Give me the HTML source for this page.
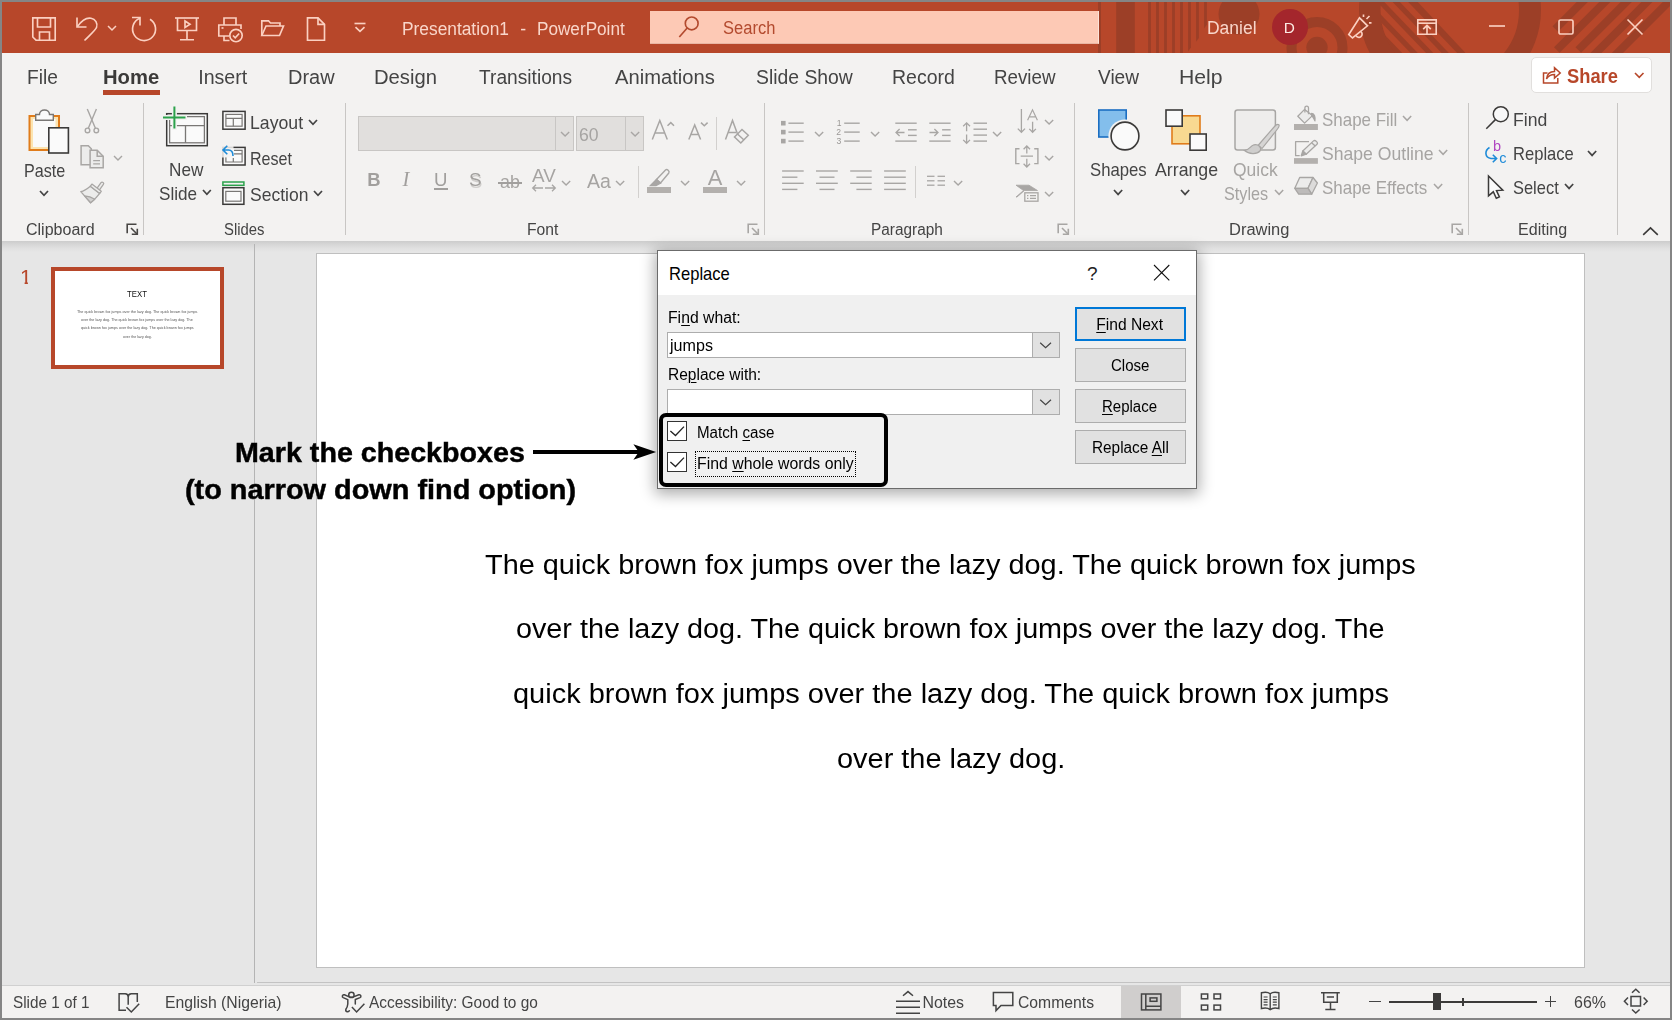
<!DOCTYPE html>
<html><head><meta charset="utf-8"><title>Presentation1 - PowerPoint</title>
<style>
html,body{margin:0;padding:0;}
body{width:1672px;height:1020px;overflow:hidden;position:relative;background:#e6e6e6;font-family:"Liberation Sans",sans-serif;}
.gl{position:absolute;left:0;top:0;width:0;height:0;will-change:transform;}
.t{position:absolute;white-space:pre;display:block;}
.r{position:absolute;box-sizing:border-box;display:block;overflow:visible;}
u{text-decoration:underline;text-underline-offset:1.5px;text-decoration-thickness:1px;}
</style></head><body>
<div class="gl">
<div class="r" style="left:0px;top:0px;width:1672px;height:1020px;background:#858585;"></div>
<div class="r" style="left:2px;top:2px;width:1668px;height:1016px;background:#e6e6e6;"></div>
<div class="r" style="left:2px;top:2px;width:1668px;height:51px;background:#b7472a;overflow:hidden;"></div>
<svg class="r" style="left:2px;top:2px;overflow:hidden;" width="1668" height="51" viewBox="2 2 1668 51" fill="none"><rect x="1098" y="0" width="3" height="55" fill="#9c3f27"/><rect x="1116.2" y="0" width="18.6" height="55" fill="#9c3f27"/><rect x="1148.1" y="0" width="2.8" height="55" fill="#9c3f27"/><rect x="1156.1" y="0" width="2.8" height="55" fill="#9c3f27"/><rect x="1164.1" y="0" width="2.8" height="55" fill="#9c3f27"/><rect x="1172.1" y="0" width="2.8" height="55" fill="#9c3f27"/><rect x="1180.1" y="0" width="2.8" height="55" fill="#9c3f27"/><path d="M1188.1 0 H1190.9 V47.6 L1188.1 51.4 Z" fill="#9c3f27"/><path d="M1196.1 0 H1198.9 V37.9 L1196.1 41.699999999999996 Z" fill="#9c3f27"/><path d="M1204.1 0 H1206.9 V24.700000000000003 L1204.1 28.5 Z" fill="#9c3f27"/><circle cx="1239" cy="14" r="20.5" fill="#9c3f27"/><circle cx="1317" cy="47.5" r="25.5" stroke="#9c3f27" stroke-width="10"/><circle cx="1317" cy="47.5" r="10.7" fill="#9c3f27"/><circle cx="1450" cy="10" r="80" stroke="#9c3f27" stroke-width="22"/><clipPath id="rc"><circle cx="1450" cy="10" r="69.5"/></clipPath><g clip-path="url(#rc)"><path d="M1378 0 H1415.9 L1465.1 52.6 V56 H1378 Z" fill="#9c3f27"/><path d="M1397.90 0 H1406.27 L1459.72 55.6 H1451.35 Z" fill="#b7472a"/><path d="M1382.35 0 H1390.72 L1444.17 55.6 H1435.80 Z" fill="#b7472a"/><path d="M1366.80 0 H1375.17 L1428.62 55.6 H1420.25 Z" fill="#b7472a"/><path d="M1351.25 0 H1359.62 L1413.07 55.6 H1404.70 Z" fill="#b7472a"/><path d="M1335.70 0 H1344.07 L1397.52 55.6 H1389.15 Z" fill="#b7472a"/></g><path d="M1592.3 -8 L1555.3 29" stroke="#9c3f27" stroke-width="7.9"/><path d="M1614.8 -8 L1556.8 50" stroke="#9c3f27" stroke-width="7.9"/><path d="M1636.3 -8 L1578.3 50" stroke="#9c3f27" stroke-width="7.9"/><path d="M1656.9 -8 L1568.9 80" stroke="#9c3f27" stroke-width="7.9"/><path d="M1678.4 -8 L1590.4 80" stroke="#9c3f27" stroke-width="7.9"/></svg>
<svg class="r" style="left:30px;top:15px;" width="28" height="28" viewBox="0 0 28 28" fill="none"><g stroke="#fbd0c1" stroke-width="1.65"><path d="M2.8 2.8 H25.2 V25.2 H6 L2.8 22 Z"/><path d="M7.5 2.8 V12 H20.5 V2.8"/><path d="M9.5 25.2 V17 H19.5 V25.2"/></g></svg>
<svg class="r" style="left:74px;top:15px;" width="28" height="28" viewBox="0 0 28 28" fill="none"><g stroke="#fbd0c1" stroke-width="1.65"><path d="M3 2.5 V12 H12.5"/><path d="M3.5 11.5 C8 5 13 2.5 17 3.2 C21.5 4 24 8.5 22.5 12.5 C21.5 15 18 18 10.5 25.5"/></g></svg>
<svg class="r" style="left:106.5px;top:24.5px;" width="10" height="6.3" viewBox="0 0 10 6.3" fill="none"><path d="M1 1 L5.0 5.0 L9 1" stroke="#fbd0c1" stroke-width="1.5"/></svg>
<svg class="r" style="left:130px;top:15px;" width="28" height="28" viewBox="0 0 28 28" fill="none"><g stroke="#fbd0c1" stroke-width="1.65"><path d="M2 2.5 H10 V10.5"/><path d="M20 4.2 A11.5 11.5 0 1 1 10 3.3"/></g></svg>
<svg class="r" style="left:174px;top:15px;" width="26" height="28" viewBox="0 0 26 28" fill="none"><g stroke="#fbd0c1" stroke-width="1.65"><path d="M1 3 H25"/><path d="M3.5 3 V15.5 H22.5 V3"/><path d="M13 15.5 V24.5 M6 24.7 H20"/><path d="M11 6 L16 9.2 L11 12.4 Z"/></g></svg>
<svg class="r" style="left:216px;top:15px;" width="28" height="28" viewBox="0 0 28 28" fill="none"><g stroke="#fbd0c1" stroke-width="1.65"><path d="M8 10 V3 H20 V10"/><path d="M13 21 H2.8 V10 H25 V14"/><path d="M5.5 13 H7.5"/><path d="M8 21 V25.5 H13.5"/><circle cx="20" cy="20.5" r="6.2"/><path d="M17 20.5 L19.2 22.8 L23.2 18.5"/></g></svg>
<svg class="r" style="left:260px;top:18px;" width="26" height="20" viewBox="0 0 26 20" fill="none"><g stroke="#fbd0c1" stroke-width="1.65"><path d="M1.8 17.5 V2.8 H8.5 L10.5 5 H20 V8"/><path d="M1.8 17.5 L6 8 H23.5 L19.5 17.5 Z"/></g></svg>
<svg class="r" style="left:305px;top:15px;" width="22" height="28" viewBox="0 0 22 28" fill="none"><g stroke="#fbd0c1" stroke-width="1.65"><path d="M2.5 2.8 H13 L19.5 9.3 V25.2 H2.5 Z"/><path d="M13 2.8 V9.3 H19.5"/></g></svg>
<svg class="r" style="left:352px;top:21px;" width="16" height="12" viewBox="0 0 16 12" fill="none"><g stroke="#fbd0c1" stroke-width="1.65"><path d="M2.5 2.5 H13.5"/><path d="M3.5 6.2 L8 10.3 L12.5 6.2"/></g></svg>
<span class="t" style="left:401.57px;top:21.00px;font-size:17.6px;line-height:17.6px;color:#f9d6ca;transform:scaleX(0.9849);transform-origin:0 0;">Presentation1</span>
<span class="t" style="left:520.20px;top:21.00px;font-size:17.6px;line-height:17.6px;color:#f9d6ca;">-</span>
<span class="t" style="left:537.09px;top:21.00px;font-size:17.6px;line-height:17.6px;color:#f9d6ca;transform:scaleX(0.9751);transform-origin:0 0;">PowerPoint</span>
<div class="r" style="left:650px;top:11px;width:449px;height:33px;background:#fdc9b5;border-right:1px solid #fbe3da;border-bottom:1px solid #e9b5a3;"></div>
<svg class="r" style="left:676px;top:14px;" width="26" height="26" viewBox="0 0 26 26" fill="none"><g stroke="#b34a2e" stroke-width="1.65"><circle cx="15.7" cy="9.4" r="6.4"/><path d="M11.2 14 L3.3 23"/></g></svg>
<span class="t" style="left:722.97px;top:19.00px;font-size:18px;line-height:18px;color:#b34a2e;transform:scaleX(0.9173);transform-origin:0 0;">Search</span>
<span class="t" style="left:1206.89px;top:19.00px;font-size:18px;line-height:18px;color:#f9d6ca;transform:scaleX(0.9711);transform-origin:0 0;">Daniel</span>
<div class="r" style="left:1272px;top:8.7px;width:36px;height:36px;background:#a4262c;border-radius:50%;"></div>
<span class="t" style="left:1283.75px;top:20.00px;font-size:15.4px;line-height:15.4px;color:#fdebe4;">D</span>
<svg class="r" style="left:1346px;top:13px;" width="30" height="28" viewBox="0 0 30 28" fill="none"><g stroke="#fbd0c1" stroke-width="1.65"><path d="M2.8 21.5 L13.5 4.8 L21.5 12.8 L6.5 25 Z"/><path d="M10 22.5 A3.2 3.2 0 1 0 14.8 18.6"/><path d="M20.5 6 L23.5 3 M23 9.8 H25.5 M17.5 4 V1.5"/></g></svg>
<svg class="r" style="left:1416px;top:17px;" width="22" height="20" viewBox="0 0 22 20" fill="none"><g stroke="#fbd0c1" stroke-width="1.65"><path d="M1.8 2.8 H20.2 V17.2 H1.8 Z"/><path d="M1.8 6.2 H20.2"/><path d="M11 17 V8.4 M7.2 12.2 L11 8.4 L14.8 12.2"/></g></svg>
<svg class="r" style="left:1489px;top:24px;" width="16" height="4" viewBox="0 0 16 4" fill="none"><path d="M0 2 H16" stroke="#fbd0c1" stroke-width="1.65"/></svg>
<svg class="r" style="left:1558px;top:19px;" width="16" height="16" viewBox="0 0 16 16" fill="none"><rect x="1" y="1" width="14" height="14" rx="1.5" stroke="#fbd0c1" stroke-width="1.65"/></svg>
<svg class="r" style="left:1626px;top:18px;" width="18" height="18" viewBox="0 0 18 18" fill="none"><path d="M1.5 1.5 L16.5 16.5 M16.5 1.5 L1.5 16.5" stroke="#fbd0c1" stroke-width="1.65"/></svg>
<div class="r" style="left:2px;top:53px;width:1668px;height:188px;background:#f3f2f1;"></div>
<span class="t" style="left:26.74px;top:68.00px;font-size:19.6px;line-height:19.6px;color:#444444;transform:scaleX(0.9777);transform-origin:0 0;">File</span>
<span class="t" style="left:198.20px;top:68.00px;font-size:19.6px;line-height:19.6px;color:#444444;">Insert</span>
<span class="t" style="left:288.37px;top:68.00px;font-size:19.6px;line-height:19.6px;color:#444444;transform:scaleX(1.0181);transform-origin:0 0;">Draw</span>
<span class="t" style="left:374.35px;top:68.00px;font-size:19.6px;line-height:19.6px;color:#444444;transform:scaleX(1.0318);transform-origin:0 0;">Design</span>
<span class="t" style="left:479.06px;top:68.00px;font-size:19.6px;line-height:19.6px;color:#444444;transform:scaleX(0.9787);transform-origin:0 0;">Transitions</span>
<span class="t" style="left:614.95px;top:68.00px;font-size:19.6px;line-height:19.6px;color:#444444;transform:scaleX(1.0291);transform-origin:0 0;">Animations</span>
<span class="t" style="left:756.11px;top:68.00px;font-size:19.6px;line-height:19.6px;color:#444444;transform:scaleX(0.9877);transform-origin:0 0;">Slide Show</span>
<span class="t" style="left:892.41px;top:68.00px;font-size:19.6px;line-height:19.6px;color:#444444;transform:scaleX(0.9942);transform-origin:0 0;">Record</span>
<span class="t" style="left:994.47px;top:68.00px;font-size:19.6px;line-height:19.6px;color:#444444;transform:scaleX(0.9569);transform-origin:0 0;">Review</span>
<span class="t" style="left:1097.90px;top:68.00px;font-size:19.6px;line-height:19.6px;color:#444444;transform:scaleX(0.9739);transform-origin:0 0;">View</span>
<span class="t" style="left:1179.27px;top:68.00px;font-size:19.6px;line-height:19.6px;color:#444444;transform:scaleX(1.0818);transform-origin:0 0;">Help</span>
<span class="t" style="left:102.66px;top:68.00px;font-size:19.6px;line-height:19.6px;color:#3b3a39;font-weight:bold;transform:scaleX(1.0324);transform-origin:0 0;">Home</span>
<div class="r" style="left:103px;top:90.4px;width:57px;height:4.2px;background:#b7472a;"></div>
<div class="r" style="left:1531px;top:57px;width:121px;height:36px;background:#fff;border:1px solid #e1dfdd;border-radius:5px;"></div>
<svg class="r" style="left:1541px;top:65px;" width="22" height="20" viewBox="0 0 22 20" fill="none"><g stroke="#b7472a" stroke-width="1.5"><path d="M6.5 8 H2.5 V18 H16.8 V13"/><path d="M5.5 14 C6 9 9 6.5 13.5 6.5 V2.8 L19.2 8 L13.5 13 V9.5 C10 9.5 7.5 10.5 5.5 14 Z"/></g></svg>
<span class="t" style="left:1566.96px;top:66.00px;font-size:20.2px;line-height:20.2px;color:#b7472a;font-weight:bold;transform:scaleX(0.9079);transform-origin:0 0;">Share</span>
<svg class="r" style="left:1634px;top:72px;" width="10.5" height="6.6" viewBox="0 0 10.5 6.6" fill="none"><path d="M1 1 L5.25 5.3 L9.5 1" stroke="#b7472a" stroke-width="1.6"/></svg>
<svg class="r" style="left:26px;top:106px;" width="46" height="50" viewBox="0 0 46 50" fill="none">
<rect x="3.5" y="10" width="29.5" height="34" fill="#fce4b0" stroke="#e07c1b" stroke-width="2"/>
<rect x="7" y="13" width="22.5" height="28" fill="#fafafa"/>
<path d="M9.7 14.2 V8.5 H13.5 C13.5 2.5 23.5 2.5 23.5 8.5 H27.3 V14.2 Z" fill="#fafafa" stroke="#797775" stroke-width="1.4"/>
<rect x="22.8" y="21.8" width="19.6" height="25.2" fill="#fafafa" stroke="#3b3a39" stroke-width="1.6"/></svg>
<span class="t" style="left:23.99px;top:163.00px;font-size:17.9px;line-height:17.9px;color:#444444;transform:scaleX(0.9011);transform-origin:0 0;">Paste</span>
<svg class="r" style="left:39.3px;top:190.2px;" width="10" height="6.6" viewBox="0 0 10 6.6" fill="none"><path d="M1 1 L5.0 5.3 L9 1" stroke="#444444" stroke-width="1.7"/></svg>
<svg class="r" style="left:82px;top:107px;" width="20" height="28" viewBox="0 0 20 28" fill="none"><g stroke="#a8a6a4" stroke-width="1.4"><path d="M5.3 2.1 L13.4 21.2"/><path d="M14.4 2.1 L6.3 21.2"/><circle cx="5.5" cy="23.4" r="2.3"/><circle cx="14.3" cy="23.4" r="2.3"/></g></svg>
<svg class="r" style="left:78px;top:143px;" width="28" height="28" viewBox="0 0 28 28" fill="none"><g stroke="#a8a6a4" stroke-width="1.5" fill="#ececeb"><path d="M12.1 21.7 H3.1 V2.8 H10.3 L13.3 5.8 V8"/><path d="M12.1 7.3 H19.2 L25.2 13.3 V24.8 H12.1 Z"/><path d="M19.2 7.3 V13.3 H25.2" fill="none"/><path d="M15.2 17.7 H22 M15.2 20.8 H22" fill="none" stroke-width="1.3"/></g></svg>
<svg class="r" style="left:113.3px;top:155.3px;" width="10" height="6.3" viewBox="0 0 10 6.3" fill="none"><path d="M1 1 L5.0 5.0 L9 1" stroke="#a8a6a4" stroke-width="1.4"/></svg>
<svg class="r" style="left:79px;top:179px;" width="28" height="28" viewBox="0 0 28 28" fill="none"><path d="M23.2 4.6 L18.6 10.9" stroke="#a8a6a4" stroke-width="4.2" stroke-linecap="round"/><path d="M23.2 4.6 L18.4 11.2" stroke="#ececeb" stroke-width="1.7" stroke-linecap="round"/>
<g stroke="#a8a6a4" stroke-width="1.3" stroke-linejoin="round"><path d="M11.35 7.2 C8 10 5 12 1.8 12.6 L11.6 23.8 C15 21 18.5 17.5 20.7 14.4 Z" fill="#ececeb"/><path d="M5.6 16.9 C9 17 12.5 18 15.8 20.2 L11.6 23.8 Z" fill="#d2d1d0"/><path d="M12.9 5.1 L22.25 12.3 L20.7 14.4 L11.35 7.2 Z" fill="#ececeb"/></g></svg>
<span class="t" style="left:25.99px;top:222.00px;font-size:15.8px;line-height:15.8px;color:#444444;transform:scaleX(1.0137);transform-origin:0 0;">Clipboard</span>
<svg class="r" style="left:125.5px;top:223px;" width="13" height="13" viewBox="0 0 13 13" fill="none"><g stroke="#484644" stroke-width="1.6"><path d="M1.2 10.3 V1.2 H10.5"/><path d="M5 5 L11 11"/><path d="M11.3 5.8 V11.3 H5.8"/></g></svg>
<div class="r" style="left:143px;top:103px;width:1px;height:132px;background:#c8c6c4;"></div>
<svg class="r" style="left:160px;top:104px;" width="50" height="44" viewBox="0 0 50 44" fill="none">
<rect x="6.7" y="9.7" width="40.6" height="32" stroke="#3b3a39" stroke-width="1.5" fill="#fafafa"/>
<rect x="9.6" y="12.6" width="34.8" height="26.2" stroke="#797775" stroke-width="1.3"/>
<path d="M9.6 21.6 H44.4 M25.5 21.6 V38.8" stroke="#797775" stroke-width="1.3"/>
<path d="M1.5 13.5 H27 M14.4 0.5 V26" stroke="#f3f2f1" stroke-width="5"/>
<path d="M3 13.5 H25.5 M14.4 2.4 V24.4" stroke="#2ca24c" stroke-width="2"/></svg>
<span class="t" style="left:169.11px;top:162.00px;font-size:17.9px;line-height:17.9px;color:#444444;transform:scaleX(0.9593);transform-origin:0 0;">New</span>
<span class="t" style="left:159.13px;top:186.00px;font-size:17.9px;line-height:17.9px;color:#444444;transform:scaleX(0.9581);transform-origin:0 0;">Slide</span>
<svg class="r" style="left:202.3px;top:189.3px;" width="9.8" height="6.6" viewBox="0 0 9.8 6.6" fill="none"><path d="M1 1 L4.9 5.3 L8.8 1" stroke="#444444" stroke-width="1.7"/></svg>
<svg class="r" style="left:221px;top:109px;" width="26" height="22" viewBox="0 0 26 22" fill="none"><rect x="1.9" y="2.4" width="22.2" height="17.8" stroke="#3b3a39" stroke-width="1.5" fill="#fafafa"/>
<rect x="4.9" y="5.4" width="16.2" height="11.8" stroke="#797775" stroke-width="1.2"/><path d="M4.9 9.3 H21.1 M12.3 9.3 V17.2" stroke="#797775" stroke-width="1.2"/></svg>
<span class="t" style="left:249.87px;top:115.00px;font-size:17.9px;line-height:17.9px;color:#444444;transform:scaleX(0.9875);transform-origin:0 0;">Layout</span>
<svg class="r" style="left:308.3px;top:118.5px;" width="10" height="6.6" viewBox="0 0 10 6.6" fill="none"><path d="M1 1 L5.0 5.3 L9 1" stroke="#444444" stroke-width="1.7"/></svg>
<svg class="r" style="left:221px;top:143px;" width="26" height="24" viewBox="0 0 26 24" fill="none"><rect x="1.9" y="4.4" width="22.2" height="17.6" stroke="#3b3a39" stroke-width="1.5" fill="#fafafa"/>
<path d="M13 7.4 H21.1 V19 H4.9 V14" stroke="#797775" stroke-width="1.2"/><path d="M13 10.8 H21 M12.3 15 V19" stroke="#797775" stroke-width="1.2"/>
<path d="M0 0 H12.5 V14.5 H0 Z" fill="#f3f2f1" opacity="0.85"/>
<path d="M6.3 2.8 L2 7 L6.3 11.2 M2.3 7 H7.5 C10.5 7 12 9 12 13" stroke="#1e8bd8" stroke-width="1.6"/></svg>
<span class="t" style="left:250.00px;top:151.00px;font-size:17.9px;line-height:17.9px;color:#444444;transform:scaleX(0.8982);transform-origin:0 0;">Reset</span>
<svg class="r" style="left:221px;top:180px;" width="26" height="26" viewBox="0 0 26 26" fill="none"><rect x="1.9" y="2" width="21" height="3.3" stroke="#2ca24c" stroke-width="1.5"/>
<rect x="1.9" y="7.7" width="21" height="16.6" stroke="#3b3a39" stroke-width="1.5" fill="#fafafa"/>
<rect x="4.8" y="11.4" width="15.2" height="9.8" stroke="#797775" stroke-width="1.2"/></svg>
<span class="t" style="left:250.22px;top:187.00px;font-size:17.9px;line-height:17.9px;color:#444444;transform:scaleX(0.9784);transform-origin:0 0;">Section</span>
<svg class="r" style="left:313.3px;top:190.2px;" width="10" height="6.6" viewBox="0 0 10 6.6" fill="none"><path d="M1 1 L5.0 5.3 L9 1" stroke="#444444" stroke-width="1.7"/></svg>
<span class="t" style="left:224.14px;top:222.00px;font-size:15.8px;line-height:15.8px;color:#444444;transform:scaleX(0.9402);transform-origin:0 0;">Slides</span>
<div class="r" style="left:345px;top:103px;width:1px;height:132px;background:#c8c6c4;"></div>
<div class="r" style="left:358px;top:116px;width:216px;height:35px;background:#e1dfdd;border:1px solid #c8c6c4;"></div>
<div class="r" style="left:555px;top:117px;width:1px;height:33px;background:#c8c6c4;"></div>
<svg class="r" style="left:560px;top:131.2px;" width="10.2" height="6.4" viewBox="0 0 10.2 6.4" fill="none"><path d="M1 1 L5.1 5.1000000000000005 L9.2 1" stroke="#a8a6a4" stroke-width="1.4"/></svg>
<div class="r" style="left:576px;top:116px;width:68px;height:35px;background:#e1dfdd;border:1px solid #c8c6c4;"></div>
<div class="r" style="left:625px;top:117px;width:1px;height:33px;background:#c8c6c4;"></div>
<span class="t" style="left:579.09px;top:127.00px;font-size:17.5px;line-height:17.5px;color:#a6a4a2;transform:scaleX(1.0056);transform-origin:0 0;">60</span>
<svg class="r" style="left:630.4px;top:131.2px;" width="10.2" height="6.4" viewBox="0 0 10.2 6.4" fill="none"><path d="M1 1 L5.1 5.1000000000000005 L9.2 1" stroke="#a8a6a4" stroke-width="1.4"/></svg>
<svg class="r" style="left:650px;top:118px;" width="26" height="24" viewBox="0 0 26 24" fill="none"><g stroke="#a8a6a4" stroke-width="1.5"><path d="M2.3 21.5 L9.8 2.5 L17.3 21.5 M4.8 15 H14.8"/><path d="M17.5 7.8 L20.8 4.6 L24 7.8"/></g></svg>
<svg class="r" style="left:686px;top:118px;" width="24" height="24" viewBox="0 0 24 24" fill="none"><g stroke="#a8a6a4" stroke-width="1.5"><path d="M2.8 21.5 L8.7 7 L14.6 21.5 M4.8 16.5 H12.6"/><path d="M15 4.6 L18.3 7.8 L21.6 4.6"/></g></svg>
<div class="r" style="left:716px;top:117px;width:1px;height:33px;background:#d2d0ce;"></div>
<svg class="r" style="left:723px;top:118px;" width="28" height="28" viewBox="0 0 28 28" fill="none"><g stroke="#a8a6a4" stroke-width="1.5"><path d="M2.5 21.5 L9.5 2.5 L14.5 16 M5 14.5 H13"/><path d="M11.5 19 L19 11.5 L25.3 17.3 L17.8 25 Z" fill="#f3f2f1"/><path d="M14.5 16 L21 22"/></g></svg>
<span class="t" style="left:367.35px;top:171.00px;font-size:18.4px;line-height:18.4px;color:#a19f9d;font-weight:bold;">B</span>
<span class="t" style="left:402.5px;top:167.5px;font-family:'Liberation Serif',serif;font-style:italic;font-size:20.5px;line-height:22px;color:#a19f9d;">I</span>
<span class="t" style="left:434.05px;top:171.00px;font-size:18.6px;line-height:18.6px;color:#a19f9d;">U</span>
<div class="r" style="left:434px;top:188.3px;width:14px;height:1.5px;background:#a19f9d;"></div>
<span class="t" style="left:469.85px;top:173.00px;font-size:18.9px;line-height:18.9px;color:#d0cecc;">S</span>
<span class="t" style="left:468.95px;top:171.00px;font-size:18.9px;line-height:18.9px;color:#a19f9d;">S</span>
<span class="t" style="left:499.83px;top:173.00px;font-size:18.6px;line-height:18.6px;color:#a6a4a2;transform:scaleX(0.9634);transform-origin:0 0;">ab</span>
<div class="r" style="left:498px;top:182.3px;width:24px;height:1.3px;background:#a19f9d;"></div>
<span class="t" style="left:532.25px;top:167.00px;font-size:18.2px;line-height:18.2px;color:#a6a4a2;transform:scaleX(1.0351);transform-origin:0 0;">AV</span>
<svg class="r" style="left:531px;top:184px;" width="26" height="8" viewBox="0 0 26 8" fill="none"><g stroke="#a8a6a4" stroke-width="1.3"><path d="M1.5 4 H12 M5 0.8 L1.7 4 L5 7.2"/><path d="M14 4 H24.5 M21 0.8 L24.3 4 L21 7.2"/></g></svg>
<svg class="r" style="left:561.3px;top:179.5px;" width="10.2" height="6.4" viewBox="0 0 10.2 6.4" fill="none"><path d="M1 1 L5.1 5.1000000000000005 L9.2 1" stroke="#a8a6a4" stroke-width="1.4"/></svg>
<span class="t" style="left:586.65px;top:171.00px;font-size:20.5px;line-height:20.5px;color:#a6a4a2;transform:scaleX(0.9520);transform-origin:0 0;">Aa</span>
<svg class="r" style="left:615.2px;top:179.5px;" width="10.2" height="6.4" viewBox="0 0 10.2 6.4" fill="none"><path d="M1 1 L5.1 5.1000000000000005 L9.2 1" stroke="#a8a6a4" stroke-width="1.4"/></svg>
<div class="r" style="left:638px;top:166px;width:1px;height:32px;background:#d2d0ce;"></div>
<svg class="r" style="left:646px;top:166px;" width="28" height="22" viewBox="0 0 28 22" fill="none"><g stroke="#a8a6a4" stroke-width="1.4"><path d="M10.5 13.5 L19.5 4 C21 2.5 24 5 22.8 7 L14.5 17 Z" fill="#f3f2f1"/><path d="M10.5 13.5 L14.5 17 L10 19.5 H4.5 Z" fill="#a8a6a4"/></g></svg>
<div class="r" style="left:647px;top:187.2px;width:24px;height:5.8px;background:#b3b0ad;"></div>
<svg class="r" style="left:680.2px;top:179.5px;" width="10.2" height="6.4" viewBox="0 0 10.2 6.4" fill="none"><path d="M1 1 L5.1 5.1000000000000005 L9.2 1" stroke="#a8a6a4" stroke-width="1.4"/></svg>
<span class="t" style="left:707.75px;top:167.00px;font-size:21.9px;line-height:21.9px;color:#a6a4a2;">A</span>
<div class="r" style="left:703px;top:187.2px;width:24px;height:5.8px;background:#b3b0ad;"></div>
<svg class="r" style="left:736.2px;top:179.5px;" width="10.2" height="6.4" viewBox="0 0 10.2 6.4" fill="none"><path d="M1 1 L5.1 5.1000000000000005 L9.2 1" stroke="#a8a6a4" stroke-width="1.4"/></svg>
<span class="t" style="left:526.71px;top:222.00px;font-size:15.8px;line-height:15.8px;color:#444444;transform:scaleX(0.9917);transform-origin:0 0;">Font</span>
<svg class="r" style="left:746.7px;top:223px;" width="13" height="13" viewBox="0 0 13 13" fill="none"><g stroke="#a8a6a4" stroke-width="1.6"><path d="M1.2 10.3 V1.2 H10.5"/><path d="M5 5 L11 11"/><path d="M11.3 5.8 V11.3 H5.8"/></g></svg>
<div class="r" style="left:764px;top:103px;width:1px;height:132px;background:#c8c6c4;"></div>
<svg class="r" style="left:770px;top:100px;" width="300" height="110" viewBox="770 100 300 110" fill="none"><rect x="781" y="120.9" width="4.6" height="4.6" fill="#a8a6a4"/><path d="M788.4 123.2 H803.7" stroke="#a8a6a4" stroke-width="1.4"/><rect x="781" y="129.79999999999998" width="4.6" height="4.6" fill="#a8a6a4"/><path d="M788.4 132.1 H803.7" stroke="#a8a6a4" stroke-width="1.4"/><rect x="781" y="138.79999999999998" width="4.6" height="4.6" fill="#a8a6a4"/><path d="M788.4 141.1 H803.7" stroke="#a8a6a4" stroke-width="1.4"/><path d="M844.2 123.2 H859.7" stroke="#a8a6a4" stroke-width="1.4"/><path d="M844.2 132.1 H859.7" stroke="#a8a6a4" stroke-width="1.4"/><path d="M844.2 141.1 H859.7" stroke="#a8a6a4" stroke-width="1.4"/><path d="M895.3 123.2 H916.7" stroke="#a8a6a4" stroke-width="1.4"/><path d="M895.3 141.1 H916.7" stroke="#a8a6a4" stroke-width="1.4"/><path d="M908 129.8 H916.7" stroke="#a8a6a4" stroke-width="1.4"/><path d="M908 135.4 H916.7" stroke="#a8a6a4" stroke-width="1.4"/><path d="M896 132.5 H904.5 M899.6 129 L896 132.5 L899.6 136" stroke="#a8a6a4" stroke-width="1.3"/><path d="M929.3 123.2 H950.6" stroke="#a8a6a4" stroke-width="1.4"/><path d="M929.3 141.1 H950.6" stroke="#a8a6a4" stroke-width="1.4"/><path d="M942.1 129.8 H950.6" stroke="#a8a6a4" stroke-width="1.4"/><path d="M942.1 135.4 H950.6" stroke="#a8a6a4" stroke-width="1.4"/><path d="M929.5 132.5 H938 M934.4 129 L938 132.5 L934.4 136" stroke="#a8a6a4" stroke-width="1.3"/><path d="M973.5 123.2 H987" stroke="#a8a6a4" stroke-width="1.4"/><path d="M973.5 129.2 H987" stroke="#a8a6a4" stroke-width="1.4"/><path d="M973.5 135.1 H987" stroke="#a8a6a4" stroke-width="1.4"/><path d="M973.5 141.1 H987" stroke="#a8a6a4" stroke-width="1.4"/><path d="M966.6 123 V131.3 M966.6 134.5 V143 M963.2 126.3 L966.6 122.9 L970 126.3 M963.2 139.9 L966.6 143.3 L970 139.9" stroke="#a8a6a4" stroke-width="1.3"/><path d="M782.1 171 H803.7" stroke="#a8a6a4" stroke-width="1.4"/><path d="M816 171 H837.8" stroke="#a8a6a4" stroke-width="1.4"/><path d="M850.2 171 H871.7" stroke="#a8a6a4" stroke-width="1.4"/><path d="M884.1 171 H905.8" stroke="#a8a6a4" stroke-width="1.4"/><path d="M782.1 177.2 H797.4" stroke="#a8a6a4" stroke-width="1.4"/><path d="M819.5 177.2 H834.5" stroke="#a8a6a4" stroke-width="1.4"/><path d="M856.4 177.2 H871.7" stroke="#a8a6a4" stroke-width="1.4"/><path d="M884.1 177.2 H905.8" stroke="#a8a6a4" stroke-width="1.4"/><path d="M782.1 183.3 H803.7" stroke="#a8a6a4" stroke-width="1.4"/><path d="M816 183.3 H837.8" stroke="#a8a6a4" stroke-width="1.4"/><path d="M850.2 183.3 H871.7" stroke="#a8a6a4" stroke-width="1.4"/><path d="M884.1 183.3 H905.8" stroke="#a8a6a4" stroke-width="1.4"/><path d="M782.1 189.4 H797.4" stroke="#a8a6a4" stroke-width="1.4"/><path d="M819.5 189.4 H834.5" stroke="#a8a6a4" stroke-width="1.4"/><path d="M856.4 189.4 H871.7" stroke="#a8a6a4" stroke-width="1.4"/><path d="M884.1 189.4 H905.8" stroke="#a8a6a4" stroke-width="1.4"/><path d="M927 176.3 H934.5" stroke="#a8a6a4" stroke-width="1.3"/><path d="M937.5 176.3 H945" stroke="#a8a6a4" stroke-width="1.3"/><path d="M927 180.8 H934.5" stroke="#a8a6a4" stroke-width="1.3"/><path d="M937.5 180.8 H945" stroke="#a8a6a4" stroke-width="1.3"/><path d="M927 185.2 H934.5" stroke="#a8a6a4" stroke-width="1.3"/><path d="M937.5 185.2 H945" stroke="#a8a6a4" stroke-width="1.3"/><path d="M1021.4 109 V132.3 M1017.8 128.6 L1021.4 132.3 L1025 128.6" stroke="#a8a6a4" stroke-width="1.3"/><path d="M1027.6 120.2 L1032.5 109.8 L1037.4 120.2 M1029.3 116.8 H1035.7" stroke="#a8a6a4" stroke-width="1.2"/><path d="M1032.6 121.8 V132.3 M1029.3 128.9 L1032.6 132.3 L1035.9 128.9" stroke="#a8a6a4" stroke-width="1.3"/><path d="M1019.5 148.8 H1015.8 V163.6 H1019.5 M1034.2 148.8 H1037.9 V163.6 H1034.2" stroke="#a8a6a4" stroke-width="1.4"/><path d="M1020.7 156.1 H1033 M1026.8 146 V153.5 M1026.8 158.7 V166.9 M1023.6 149.2 L1026.8 146 L1030 149.2 M1023.6 163.8 L1026.8 167 L1030 163.8" stroke="#a8a6a4" stroke-width="1.3"/><path d="M1016 185.2 H1029 L1037.5 190.5 H1024.5 L1017 197 H1016 L1023.5 190.5 Z" fill="#a8a6a4" stroke="#a8a6a4" stroke-width="0.8"/><rect x="1024.8" y="192.8" width="13.2" height="8.4" stroke="#a8a6a4" stroke-width="1.3" fill="#f3f2f1"/><path d="M1027 195.6 H1028.4 M1030 195.6 H1036 M1027 198.4 H1028.4 M1030 198.4 H1036" stroke="#a8a6a4" stroke-width="1.1"/></svg>
<span class="t" style="left:836.75px;top:119.00px;font-size:8.6px;line-height:8.6px;color:#9a9896;">1</span>
<span class="t" style="left:836.35px;top:128.00px;font-size:8.6px;line-height:8.6px;color:#9a9896;">2</span>
<span class="t" style="left:836.45px;top:137.00px;font-size:8.6px;line-height:8.6px;color:#9a9896;">3</span>
<svg class="r" style="left:814px;top:131.2px;" width="10.2" height="6.4" viewBox="0 0 10.2 6.4" fill="none"><path d="M1 1 L5.1 5.1000000000000005 L9.2 1" stroke="#a8a6a4" stroke-width="1.4"/></svg>
<svg class="r" style="left:870px;top:131.2px;" width="10.2" height="6.4" viewBox="0 0 10.2 6.4" fill="none"><path d="M1 1 L5.1 5.1000000000000005 L9.2 1" stroke="#a8a6a4" stroke-width="1.4"/></svg>
<svg class="r" style="left:992.3px;top:131.2px;" width="10.2" height="6.4" viewBox="0 0 10.2 6.4" fill="none"><path d="M1 1 L5.1 5.1000000000000005 L9.2 1" stroke="#a8a6a4" stroke-width="1.4"/></svg>
<div class="r" style="left:915px;top:166px;width:1px;height:32px;background:#d2d0ce;"></div>
<svg class="r" style="left:953.2px;top:179.5px;" width="10.2" height="6.4" viewBox="0 0 10.2 6.4" fill="none"><path d="M1 1 L5.1 5.1000000000000005 L9.2 1" stroke="#a8a6a4" stroke-width="1.4"/></svg>
<svg class="r" style="left:1044.3px;top:119.3px;" width="10.2" height="6.4" viewBox="0 0 10.2 6.4" fill="none"><path d="M1 1 L5.1 5.1000000000000005 L9.2 1" stroke="#a8a6a4" stroke-width="1.4"/></svg>
<svg class="r" style="left:1044.3px;top:155.1px;" width="10.2" height="6.4" viewBox="0 0 10.2 6.4" fill="none"><path d="M1 1 L5.1 5.1000000000000005 L9.2 1" stroke="#a8a6a4" stroke-width="1.4"/></svg>
<svg class="r" style="left:1044.3px;top:191.4px;" width="10.2" height="6.4" viewBox="0 0 10.2 6.4" fill="none"><path d="M1 1 L5.1 5.1000000000000005 L9.2 1" stroke="#a8a6a4" stroke-width="1.4"/></svg>
<span class="t" style="left:871.33px;top:222.00px;font-size:15.8px;line-height:15.8px;color:#444444;transform:scaleX(0.9741);transform-origin:0 0;">Paragraph</span>
<svg class="r" style="left:1056.7px;top:223px;" width="13" height="13" viewBox="0 0 13 13" fill="none"><g stroke="#a8a6a4" stroke-width="1.6"><path d="M1.2 10.3 V1.2 H10.5"/><path d="M5 5 L11 11"/><path d="M11.3 5.8 V11.3 H5.8"/></g></svg>
<div class="r" style="left:1074px;top:103px;width:1px;height:132px;background:#c8c6c4;"></div>
<svg class="r" style="left:1096px;top:107px;" width="48" height="48" viewBox="0 0 48 48" fill="none"><rect x="2.8" y="3" width="27.4" height="27" fill="#83beec" stroke="#1b6ec2" stroke-width="1.6"/>
<circle cx="29" cy="29" r="16.6" fill="#f3f2f1"/><circle cx="29" cy="29" r="13.9" fill="#fafafa" stroke="#3b3a39" stroke-width="1.6"/></svg>
<span class="t" style="left:1089.95px;top:162.00px;font-size:17.9px;line-height:17.9px;color:#444444;transform:scaleX(0.9350);transform-origin:0 0;">Shapes</span>
<svg class="r" style="left:1113.2px;top:189px;" width="10.2" height="6.7" viewBox="0 0 10.2 6.7" fill="none"><path d="M1 1 L5.1 5.4 L9.2 1" stroke="#444444" stroke-width="1.7"/></svg>
<svg class="r" style="left:1163px;top:107px;" width="46" height="46" viewBox="0 0 46 46" fill="none"><rect x="9" y="8.8" width="28" height="28" fill="#f8d991" stroke="#e07c1b" stroke-width="1.6"/>
<rect x="3" y="3" width="16.2" height="16.2" fill="#fafafa" stroke="#3b3a39" stroke-width="1.6"/>
<rect x="27" y="27" width="16.2" height="16.2" fill="#fafafa" stroke="#3b3a39" stroke-width="1.6"/></svg>
<span class="t" style="left:1154.55px;top:162.00px;font-size:17.9px;line-height:17.9px;color:#444444;transform:scaleX(0.9912);transform-origin:0 0;">Arrange</span>
<svg class="r" style="left:1180.2px;top:189px;" width="10.2" height="6.7" viewBox="0 0 10.2 6.7" fill="none"><path d="M1 1 L5.1 5.4 L9.2 1" stroke="#444444" stroke-width="1.7"/></svg>
<svg class="r" style="left:1232px;top:107px;" width="50" height="50" viewBox="0 0 50 50" fill="none"><rect x="3" y="3" width="40.4" height="40" rx="2.5" fill="#eeedec" stroke="#a8a6a4" stroke-width="1.5"/>
<path d="M10 44 H28 V47 H10 Z" fill="#f3f2f1"/>
<path d="M46.8 17.7 C45.5 16.8 44 17.8 42.5 19.5 L26 38.5 L30 41.5 L45.5 22 C46.8 20.3 47.6 18.6 46.8 17.7 Z" fill="#d6d5d4" stroke="#a8a6a4" stroke-width="1.2"/>
<path d="M12.5 43.5 C17 43.5 18 39 22 37.8 C26 36.8 30.5 40.5 28 44 C25 47.5 17 47.5 12.5 43.5 Z" fill="#cfcecd" stroke="#a8a6a4" stroke-width="1.2"/></svg>
<span class="t" style="left:1232.97px;top:162.00px;font-size:17.9px;line-height:17.9px;color:#a6a4a2;transform:scaleX(0.9755);transform-origin:0 0;">Quick</span>
<span class="t" style="left:1224.48px;top:186.00px;font-size:17.9px;line-height:17.9px;color:#a6a4a2;transform:scaleX(0.9049);transform-origin:0 0;">Styles</span>
<svg class="r" style="left:1274.1px;top:189.3px;" width="10.2" height="6.6" viewBox="0 0 10.2 6.6" fill="none"><path d="M1 1 L5.1 5.3 L9.2 1" stroke="#a8a6a4" stroke-width="1.5"/></svg>
<svg class="r" style="left:1293px;top:104px;" width="28" height="28" viewBox="0 0 28 28" fill="none"><g stroke="#a8a6a4" stroke-width="1.3" stroke-linejoin="round"><path d="M4.8 12.2 L11.6 5.4 L19.4 11.6 L11.6 19.1 Z" fill="#ececeb"/><path d="M11.9 8.5 V4 C11.9 1.5 15.5 1.5 15.5 4 V10.3" fill="none"/><path d="M18.6 9.3 C21.5 9.6 22.4 13 21.9 16.8 C20.8 14.3 19.8 13 18.8 11.6 Z" fill="#a8a6a4"/></g>
<rect x="1" y="20" width="23.9" height="6" fill="#b3b0ad"/></svg>
<span class="t" style="left:1322.34px;top:112.00px;font-size:17.9px;line-height:17.9px;color:#a6a4a2;transform:scaleX(0.9472);transform-origin:0 0;">Shape Fill</span>
<svg class="r" style="left:1402px;top:115.2px;" width="10.2" height="6.6" viewBox="0 0 10.2 6.6" fill="none"><path d="M1 1 L5.1 5.3 L9.2 1" stroke="#a8a6a4" stroke-width="1.5"/></svg>
<svg class="r" style="left:1293px;top:138px;" width="28" height="28" viewBox="0 0 28 28" fill="none"><g stroke="#a8a6a4" stroke-width="1.3" stroke-linejoin="round"><path d="M16 3.7 H2.6 V17.7 H6.7" fill="none"/><path d="M9.8 13 L20.5 2.9 C22 1.5 25.5 4.5 24 6.2 L13.2 16.2 Z" fill="#ececeb"/><path d="M8.2 17.9 L9.8 13 L13.2 16.2 Z" fill="#a8a6a4"/><path d="M18.6 4.7 L22.2 8" fill="none"/></g>
<rect x="1" y="20.1" width="23.9" height="5.7" fill="#b3b0ad"/></svg>
<span class="t" style="left:1322.31px;top:146.00px;font-size:17.9px;line-height:17.9px;color:#a6a4a2;transform:scaleX(0.9835);transform-origin:0 0;">Shape Outline</span>
<svg class="r" style="left:1437.9px;top:149.2px;" width="10.2" height="6.6" viewBox="0 0 10.2 6.6" fill="none"><path d="M1 1 L5.1 5.3 L9.2 1" stroke="#a8a6a4" stroke-width="1.5"/></svg>
<svg class="r" style="left:1293px;top:175px;" width="28" height="22" viewBox="0 0 28 22" fill="none"><g stroke="#a8a6a4" stroke-width="1.3" stroke-linejoin="round"><path d="M6.7 2.5 H20 L15 13.3 H1.8 Z" fill="#ececeb"/><path d="M20 2.5 L24.4 8 L18.7 19.2 L15 13.3 Z" fill="#dcdbda"/><path d="M1.8 13.3 H15 L18.7 19.2 H5.7 Z" fill="#bdbbba"/></g></svg>
<span class="t" style="left:1322.34px;top:180.00px;font-size:17.9px;line-height:17.9px;color:#a6a4a2;transform:scaleX(0.9480);transform-origin:0 0;">Shape Effects</span>
<svg class="r" style="left:1432.9px;top:183.2px;" width="10.2" height="6.6" viewBox="0 0 10.2 6.6" fill="none"><path d="M1 1 L5.1 5.3 L9.2 1" stroke="#a8a6a4" stroke-width="1.5"/></svg>
<span class="t" style="left:1229.44px;top:222.00px;font-size:15.8px;line-height:15.8px;color:#444444;transform:scaleX(1.0432);transform-origin:0 0;">Drawing</span>
<svg class="r" style="left:1450.7px;top:223px;" width="13" height="13" viewBox="0 0 13 13" fill="none"><g stroke="#a8a6a4" stroke-width="1.6"><path d="M1.2 10.3 V1.2 H10.5"/><path d="M5 5 L11 11"/><path d="M11.3 5.8 V11.3 H5.8"/></g></svg>
<div class="r" style="left:1468px;top:103px;width:1px;height:132px;background:#c8c6c4;"></div>
<svg class="r" style="left:1484px;top:104px;" width="28" height="28" viewBox="0 0 28 28" fill="none"><g stroke="#3b3a39" stroke-width="1.5"><circle cx="16.8" cy="10.2" r="7.5" fill="#f8f8f8"/><path d="M11.4 15.6 L2.3 24.8"/></g></svg>
<span class="t" style="left:1512.77px;top:112.00px;font-size:17.9px;line-height:17.9px;color:#444444;transform:scaleX(0.9845);transform-origin:0 0;">Find</span>
<span class="t" style="left:1493.05px;top:139.00px;font-size:14.5px;line-height:14.5px;color:#b146c2;">b</span>
<span class="t" style="left:1499.30px;top:151.00px;font-size:14.5px;line-height:14.5px;color:#1e8bd8;">c</span>
<svg class="r" style="left:1483px;top:144px;" width="18" height="20" viewBox="0 0 18 20" fill="none"><path d="M6.5 3.5 C1.5 6.5 1.5 13.5 8 14.5 H13 M9.8 10.8 L13.6 14.5 L9.8 18.2" stroke="#1e8bd8" stroke-width="1.6"/></svg>
<span class="t" style="left:1512.86px;top:146.00px;font-size:17.9px;line-height:17.9px;color:#444444;transform:scaleX(0.9259);transform-origin:0 0;">Replace</span>
<svg class="r" style="left:1587px;top:150.2px;" width="10.2" height="6.7" viewBox="0 0 10.2 6.7" fill="none"><path d="M1 1 L5.1 5.4 L9.2 1" stroke="#444444" stroke-width="1.7"/></svg>
<svg class="r" style="left:1486px;top:173px;" width="20" height="28" viewBox="0 0 20 28" fill="none"><path d="M2.5 3 V22.8 L7.3 18.8 L10.3 25.3 L13.4 23.9 L10.5 17.6 L16.8 17.2 Z" stroke="#3b3a39" stroke-width="1.5" fill="#fafafa" stroke-linejoin="miter"/></svg>
<span class="t" style="left:1513.06px;top:180.00px;font-size:17.9px;line-height:17.9px;color:#444444;transform:scaleX(0.9191);transform-origin:0 0;">Select</span>
<svg class="r" style="left:1564.3px;top:183.2px;" width="10.2" height="6.7" viewBox="0 0 10.2 6.7" fill="none"><path d="M1 1 L5.1 5.4 L9.2 1" stroke="#444444" stroke-width="1.7"/></svg>
<span class="t" style="left:1518.48px;top:222.00px;font-size:15.8px;line-height:15.8px;color:#444444;transform:scaleX(1.0163);transform-origin:0 0;">Editing</span>
<div class="r" style="left:1617px;top:103px;width:1px;height:132px;background:#c8c6c4;"></div>
<svg class="r" style="left:1641px;top:225px;" width="20" height="12" viewBox="0 0 20 12" fill="none"><path d="M2.2 9.8 L9.5 2.8 L16.8 9.8" stroke="#3b3a39" stroke-width="1.6"/></svg>
<div class="r" style="left:2px;top:241px;width:1668px;height:11px;background:linear-gradient(#cccccc,#d6d6d6 30%,#e0e0e0 65%,#e6e6e6);"></div>
<div class="r" style="left:254px;top:244px;width:1px;height:739px;background:#b4b4b4;"></div>
<span class="t" style="left:20.00px;top:266.00px;font-size:21px;line-height:21px;color:#b7472a;clip-path:polygon(0 0,7.9px 0,7.9px 30px,4.6px 30px,4.6px 15.6px,0 15.6px);">1</span>
<div class="r" style="left:51px;top:267px;width:173px;height:102px;background:#fff;border:4px solid #b7472a;"></div>
<span class="t" style="left:127.41px;top:291.00px;font-size:8.2px;line-height:8.2px;color:#111;transform:scaleX(0.9515);transform-origin:0 0;">TEXT</span>
<span class="t" style="left:77.30px;top:310.77px;font-size:3.7px;line-height:3.7px;color:#555;transform:scaleX(1.0139);transform-origin:0 0;">The quick brown fox jumps over the lazy dog. The quick brown fox jumps</span>
<span class="t" style="left:81.45px;top:318.77px;font-size:3.7px;line-height:3.7px;color:#555;transform:scaleX(1.0031);transform-origin:0 0;">over the lazy dog. The quick brown fox jumps over the lazy dog. The</span>
<span class="t" style="left:81.05px;top:326.67px;font-size:3.7px;line-height:3.7px;color:#555;transform:scaleX(1.0117);transform-origin:0 0;">quick brown fox jumps over the lazy dog. The quick brown fox jumps</span>
<span class="t" style="left:122.95px;top:335.77px;font-size:3.7px;line-height:3.7px;color:#555;transform:scaleX(0.9913);transform-origin:0 0;">over the lazy dog.</span>
<div class="r" style="left:316px;top:253px;width:1269px;height:715px;background:#fff;border:1px solid #bfbfbf;"></div>
<span class="t" style="left:484.83px;top:550.00px;font-size:28.2px;line-height:28.2px;color:#000;transform:scaleX(1.0249);transform-origin:0 0;">The quick brown fox jumps over the lazy dog. The quick brown fox jumps</span>
<span class="t" style="left:516.48px;top:614.00px;font-size:28.2px;line-height:28.2px;color:#000;transform:scaleX(1.0201);transform-origin:0 0;">over the lazy dog. The quick brown fox jumps over the lazy dog. The</span>
<span class="t" style="left:512.57px;top:679.00px;font-size:28.2px;line-height:28.2px;color:#000;transform:scaleX(1.0285);transform-origin:0 0;">quick brown fox jumps over the lazy dog. The quick brown fox jumps</span>
<span class="t" style="left:836.77px;top:744.00px;font-size:28.2px;line-height:28.2px;color:#000;transform:scaleX(1.0261);transform-origin:0 0;">over the lazy dog.</span>
</div>
<div class="r" style="left:657px;top:250px;width:540px;height:238.5px;background:#f0f0f0;border:1px solid #6b6b6b;box-shadow:0 3px 14px 2px rgba(0,0,0,0.33);"></div>
<div class="r" style="left:658px;top:251px;width:538px;height:44px;background:#fff;"></div>
<span class="t" style="left:668.65px;top:265.00px;font-size:18.4px;line-height:18.4px;color:#000;transform:scaleX(0.9018);transform-origin:0 0;">Replace</span>
<span class="t" style="left:1087.00px;top:264.00px;font-size:19px;line-height:19px;color:#222;">?</span>
<svg class="r" style="left:1152px;top:263px;" width="20" height="20" viewBox="0 0 20 20" fill="none"><path d="M2 2 L17.3 17.3 M17.3 2 L2 17.3" stroke="#111" stroke-width="1.1"/></svg>
<span class="t" style="left:667.64px;top:310.00px;font-size:15.6px;line-height:15.6px;color:#000;transform:scaleX(1.0101);transform-origin:0 0;">Fi<u>n</u>d what:</span>
<div class="r" style="left:667px;top:332px;width:393px;height:26px;background:#fff;border:1px solid #adadad;"></div>
<div class="r" style="left:1032px;top:332px;width:28px;height:26px;background:#e1e1e1;border:1px solid #adadad;"></div>
<svg class="r" style="left:1038px;top:340px;" width="16" height="10" viewBox="0 0 16 10" fill="none"><path d="M2.2 2.8 L7.6 7.8 L13 2.8" stroke="#444" stroke-width="1.2"/></svg>
<span class="t" style="left:670.01px;top:338.00px;font-size:15.6px;line-height:15.6px;color:#000;transform:scaleX(1.0326);transform-origin:0 0;">jumps</span>
<span class="t" style="left:667.66px;top:367.00px;font-size:15.6px;line-height:15.6px;color:#000;transform:scaleX(0.9951);transform-origin:0 0;">Re<u>p</u>lace with:</span>
<div class="r" style="left:667px;top:389px;width:393px;height:26px;background:#fff;border:1px solid #adadad;"></div>
<div class="r" style="left:1032px;top:389px;width:28px;height:26px;background:#e1e1e1;border:1px solid #adadad;"></div>
<svg class="r" style="left:1038px;top:397px;" width="16" height="10" viewBox="0 0 16 10" fill="none"><path d="M2.2 2.8 L7.6 7.8 L13 2.8" stroke="#444" stroke-width="1.2"/></svg>
<div class="r" style="left:1075px;top:307px;width:111px;height:34px;background:#e1e1e1;border:2px solid #0078d7;"></div>
<span class="t" style="left:1096.25px;top:317.00px;font-size:15.6px;line-height:15.6px;color:#000;"><u>F</u>ind Next</span>
<div class="r" style="left:1075px;top:348px;width:111px;height:34px;background:#e1e1e1;border:1px solid #adadad;"></div>
<span class="t" style="left:1110.83px;top:358.00px;font-size:15.6px;line-height:15.6px;color:#000;transform:scaleX(0.9635);transform-origin:0 0;">Close</span>
<div class="r" style="left:1075px;top:389px;width:111px;height:34px;background:#e1e1e1;border:1px solid #adadad;"></div>
<span class="t" style="left:1102.40px;top:399.00px;font-size:15.6px;line-height:15.6px;color:#000;transform:scaleX(0.9620);transform-origin:0 0;"><u>R</u>eplace</span>
<div class="r" style="left:1075px;top:430px;width:111px;height:34px;background:#e1e1e1;border:1px solid #adadad;"></div>
<span class="t" style="left:1091.77px;top:440.00px;font-size:15.6px;line-height:15.6px;color:#000;transform:scaleX(0.9842);transform-origin:0 0;">Replace <u>A</u>ll</span>
<div class="r" style="left:667px;top:421px;width:20px;height:20px;background:#fff;border:1px solid #333;"></div>
<svg class="r" style="left:667px;top:421px;" width="20" height="20" viewBox="0 0 20 20" fill="none"><path d="M3.4 10 L8.5 14.5 L17 5.6" stroke="#222" stroke-width="1.3"/></svg>
<div class="r" style="left:667px;top:452px;width:20px;height:20px;background:#fff;border:1px solid #333;"></div>
<svg class="r" style="left:667px;top:452px;" width="20" height="20" viewBox="0 0 20 20" fill="none"><path d="M3.4 10 L8.5 14.5 L17 5.6" stroke="#222" stroke-width="1.3"/></svg>
<span class="t" style="left:696.79px;top:425.00px;font-size:15.6px;line-height:15.6px;color:#000;transform:scaleX(0.9711);transform-origin:0 0;">Match <u>c</u>ase</span>
<span class="t" style="left:696.73px;top:456.00px;font-size:15.6px;line-height:15.6px;color:#000;transform:scaleX(1.0160);transform-origin:0 0;">Find <u>w</u>hole words only</span>
<div class="r" style="left:695px;top:451px;width:161px;height:26px;border:1px dotted #000;"></div>
<div class="r" style="left:659px;top:413px;width:229px;height:74px;border:4px solid #000;border-radius:7px;"></div>
<div class="gl">
<span class="t" style="left:235.46px;top:439.00px;font-size:27.4px;line-height:27.4px;color:#000;font-weight:bold;transform:scaleX(1.0460);transform-origin:0 0;-webkit-text-stroke:0.45px #000;">Mark the checkboxes</span>
<span class="t" style="left:185.08px;top:476.00px;font-size:27.4px;line-height:27.4px;color:#000;font-weight:bold;transform:scaleX(1.0534);transform-origin:0 0;-webkit-text-stroke:0.45px #000;">(to narrow down find option)</span>
<svg class="r" style="left:528px;top:440px;" width="132" height="24" viewBox="0 0 132 24" fill="none"><path d="M5 12 H112" stroke="#000" stroke-width="4"/><path d="M128.1 12 L105.4 4.3 L110.8 12 L105.4 19.8 Z" fill="#000"/></svg>
<div class="r" style="left:257px;top:982px;width:1413px;height:1px;background:#c3c3c3;"></div>
<div class="r" style="left:2px;top:985px;width:1668px;height:1px;background:#d0d0d0;"></div>
<div class="r" style="left:2px;top:986px;width:1668px;height:32px;background:#f3f2f1;"></div>
<span class="t" style="left:12.88px;top:995.00px;font-size:15.9px;line-height:15.9px;color:#444444;transform:scaleX(0.9615);transform-origin:0 0;">Slide 1 of 1</span>
<svg class="r" style="left:116px;top:990px;" width="26" height="26" viewBox="0 0 26 26" fill="none"><path d="M10 20.3 H3.1 V3.7 H9.2 Q12.2 3.7 12.2 7 V14.8 M12.2 7 Q12.2 3.7 15.3 3.7 H21.3 V12 M10.5 17.3 L15.3 22 L23.2 13.7" stroke="#444444" stroke-width="1.5"/></svg>
<span class="t" style="left:164.51px;top:995.00px;font-size:15.9px;line-height:15.9px;color:#444444;transform:scaleX(0.9909);transform-origin:0 0;">English (Nigeria)</span>
<svg class="r" style="left:340px;top:988px;" width="28" height="28" viewBox="0 0 28 28" fill="none"><g stroke="#444444" stroke-width="1.5" stroke-linecap="round" stroke-linejoin="round"><circle cx="11.4" cy="6.9" r="2.7"/><path d="M15.3 15.9 V11.5 L20 9.6 C21.6 8.8 21 6.2 18.8 6.8 L13.5 8.9 Q11.4 9.6 9.3 8.9 L4.4 6.8 C2.2 6.2 1.7 8.8 3.2 9.6 L7.8 11.6 V16 Q7.5 19 6 21 C5 23.6 7.6 24.6 9.4 22.8"/><path d="M11.9 18.9 L16.6 24 L24.4 15.7" stroke-linecap="butt" stroke-linejoin="miter"/></g></svg>
<span class="t" style="left:369.15px;top:995.00px;font-size:15.9px;line-height:15.9px;color:#444444;transform:scaleX(0.9706);transform-origin:0 0;">Accessibility: Good to go</span>
<svg class="r" style="left:893px;top:988px;" width="30" height="28" viewBox="0 0 30 28" fill="none"><g stroke="#444444" stroke-width="1.5"><path d="M10 7.8 L15 3.6 L20 7.8"/><path d="M3 13.2 H27 M3 19.2 H27 M3 25.2 H27"/></g></svg>
<span class="t" style="left:922.50px;top:995.00px;font-size:15.9px;line-height:15.9px;color:#444444;">Notes</span>
<svg class="r" style="left:990px;top:988px;" width="26" height="28" viewBox="0 0 26 28" fill="none"><path d="M3.4 4.6 H22.8 V17.5 H11 L6 22.6 V17.5 H3.4 Z" stroke="#444444" stroke-width="1.5"/></svg>
<span class="t" style="left:1018.01px;top:995.00px;font-size:15.9px;line-height:15.9px;color:#444444;transform:scaleX(0.9894);transform-origin:0 0;">Comments</span>
<div class="r" style="left:1121px;top:986px;width:60px;height:32px;background:#d0cecd;"></div>
<svg class="r" style="left:1138px;top:990px;" width="26" height="24" viewBox="0 0 26 24" fill="none"><g stroke="#444444" stroke-width="1.5"><rect x="3.5" y="4" width="19.4" height="15.9"/><path d="M7.8 4 V19.9 M7.8 16.2 H22.9"/><rect x="12.1" y="7.9" width="6.8" height="3.4"/></g></svg>
<svg class="r" style="left:1198px;top:990px;" width="26" height="24" viewBox="0 0 26 24" fill="none"><g stroke="#444444" stroke-width="1.5"><rect x="3.4" y="4" width="6.3" height="4.8"/><rect x="16" y="4" width="6.5" height="4.8"/><rect x="3.4" y="15.1" width="6.3" height="4.8"/><rect x="16" y="15.1" width="6.5" height="4.8"/></g></svg>
<svg class="r" style="left:1258px;top:990px;" width="24" height="24" viewBox="0 0 24 24" fill="none"><g stroke="#444444" stroke-width="1.4"><path d="M12.2 3.8 C10 2 6 2.2 3.4 2.8 V18.5 C6 17.8 10 17.8 12.2 19.6 C14.4 17.8 18.4 17.8 20.9 18.5 V2.8 C18.4 2.2 14.4 2 12.2 3.8 V19.6"/><path d="M5.6 7 H9.6 M5.6 9.6 H9.6 M5.6 12.2 H9.6 M5.6 14.8 H9.6 M14.8 7 H18.8 M14.8 9.6 H18.8 M14.8 12.2 H18.8 M14.8 14.8 H18.8" stroke-width="1.2"/></g></svg>
<svg class="r" style="left:1318px;top:990px;" width="24" height="24" viewBox="0 0 24 24" fill="none"><g stroke="#444444" stroke-width="1.5"><path d="M3 2.8 H21.8 M5.7 2.8 V12.2 H19.3 V2.8 M12.5 12.2 V19.5 M7.3 19.6 H17.5 M8.8 7 H16"/></g></svg>
<div class="r" style="left:1369px;top:1001px;width:11.5px;height:1.2px;background:#444444;"></div>
<div class="r" style="left:1388.7px;top:1001px;width:148.3px;height:2px;background:#3b3a39;"></div>
<div class="r" style="left:1462px;top:998px;width:2px;height:8px;background:#3b3a39;"></div>
<div class="r" style="left:1433px;top:993px;width:8px;height:17px;background:#3b3a39;"></div>
<div class="r" style="left:1545px;top:1001px;width:11.2px;height:1.2px;background:#444444;"></div>
<div class="r" style="left:1550px;top:996.2px;width:1.2px;height:10.8px;background:#444444;"></div>
<span class="t" style="left:1574.49px;top:995.00px;font-size:15.9px;line-height:15.9px;color:#444444;transform:scaleX(1.0066);transform-origin:0 0;">66%</span>
<svg class="r" style="left:1622px;top:987px;" width="28" height="28" viewBox="0 0 28 28" fill="none"><g stroke="#444444" stroke-width="1.5"><rect x="9" y="9.5" width="9.5" height="9.5"/><path d="M10 5.8 L13.8 2.2 L17.6 5.8 M10 22.5 L13.8 26 L17.6 22.5 M6 10.5 L2.4 14.2 L6 18 M21.6 10.5 L25.2 14.2 L21.6 18"/></g></svg>
</div>
</body></html>
